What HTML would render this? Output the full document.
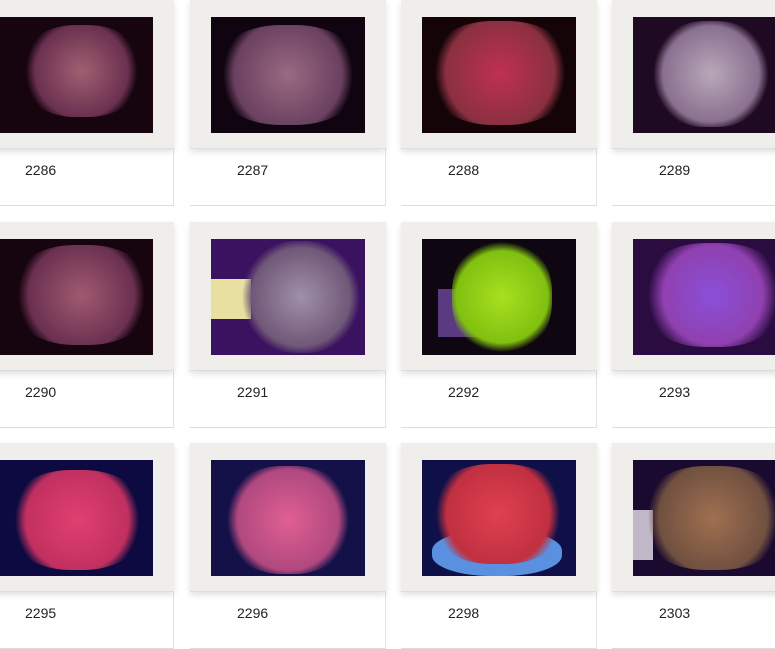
<!DOCTYPE html>
<html><head><style>
body{margin:0;width:775px;height:625px;overflow:hidden;background:#fff;position:relative;font-family:"Liberation Sans",Arial,sans-serif}
.card{position:absolute;width:196px;height:206px;border-right:1px solid #e2e2e2;border-bottom:1px solid #dcdcdc;box-sizing:border-box}
.fr{position:absolute;left:0;top:0;width:196px;height:148px;background:#efeeeb;box-shadow:0 3px 6px rgba(0,0,0,.12);border-bottom:1px solid #ddd}
.im{position:absolute;left:21px;top:17px;width:154px;height:116px;background:#120410;overflow:hidden}
.lb{position:absolute;left:47px;top:162px;font-size:14px;color:#222}
.im i{position:absolute;border-radius:45%}
</style></head><body>
<div class="card" style="left:-22px;top:0"><div class="fr"><div class="im" style="background:#16040f"><i style="left:20px;top:8px;width:125px;height:92px;background:radial-gradient(circle,#a06070 0%,#6a3050 60%,transparent 72%)"></i></div></div><div class="lb">2286</div></div>
<div class="card" style="left:190px;top:0"><div class="fr"><div class="im" style="background:#100410"><i style="left:2px;top:8px;width:150px;height:100px;background:radial-gradient(circle,#9a6a80 0%,#6a4060 60%,transparent 72%)"></i></div></div><div class="lb">2287</div></div>
<div class="card" style="left:401px;top:0"><div class="fr"><div class="im" style="background:#140408"><i style="left:4px;top:4px;width:148px;height:104px;background:radial-gradient(circle,#c03050 0%,#8a3040 60%,transparent 72%)"></i></div></div><div class="lb">2288</div></div>
<div class="card" style="left:612px;top:0"><div class="fr"><div class="im" style="background:#1e0a22"><i style="left:18px;top:4px;width:120px;height:106px;background:radial-gradient(circle,#b8a8b8 0%,#8a7090 60%,transparent 72%)"></i></div></div><div class="lb">2289</div></div>

<div class="card" style="left:-22px;top:222px"><div class="fr"><div class="im" style="background:#16040f"><i style="left:10px;top:6px;width:145px;height:100px;background:radial-gradient(circle,#a05a70 0%,#6a3050 60%,transparent 72%)"></i></div></div><div class="lb">2290</div></div>
<div class="card" style="left:190px;top:222px"><div class="fr"><div class="im" style="background:#3a1260"><i style="left:0;top:40px;width:40px;height:40px;border-radius:0;background:#e8e0a0"></i><i style="left:30px;top:2px;width:120px;height:112px;background:radial-gradient(circle,#a090a8 0%,#705878 60%,transparent 72%)"></i></div></div><div class="lb">2291</div></div>
<div class="card" style="left:401px;top:222px"><div class="fr"><div class="im" style="background:#0e0610"><i style="left:16px;top:50px;width:40px;height:48px;border-radius:0;background:#5a3a80"></i><i style="left:30px;top:0;width:100px;height:116px;background:radial-gradient(circle,#a8e020 0%,#80c010 60%,transparent 72%)"></i></div></div><div class="lb">2292</div></div>
<div class="card" style="left:612px;top:222px"><div class="fr"><div class="im" style="background:#2a0c40"><i style="left:6px;top:4px;width:148px;height:104px;background:radial-gradient(circle,#8a50d8 0%,#9040b0 55%,transparent 72%)"></i></div></div><div class="lb">2293</div></div>

<div class="card" style="left:-22px;top:443px"><div class="fr"><div class="im" style="background:#0c0a40"><i style="left:8px;top:10px;width:140px;height:100px;background:radial-gradient(circle,#e04070 0%,#c03060 60%,transparent 72%)"></i></div></div><div class="lb">2295</div></div>
<div class="card" style="left:190px;top:443px"><div class="fr"><div class="im" style="background:#141048"><i style="left:12px;top:6px;width:130px;height:108px;background:radial-gradient(circle,#e06090 0%,#b04880 60%,transparent 72%)"></i></div></div><div class="lb">2296</div></div>
<div class="card" style="left:401px;top:443px"><div class="fr"><div class="im" style="background:#101048"><i style="left:10px;top:70px;width:130px;height:46px;background:#5a90e0"></i><i style="left:6px;top:4px;width:140px;height:100px;background:radial-gradient(circle,#e04050 0%,#c03040 60%,transparent 72%)"></i></div></div><div class="lb">2298</div></div>
<div class="card" style="left:612px;top:443px"><div class="fr"><div class="im" style="background:#1a0a30"><i style="left:0;top:50px;width:20px;height:50px;border-radius:0;background:#c0b8c8"></i><i style="left:6px;top:6px;width:148px;height:104px;background:radial-gradient(circle,#a07050 0%,#705040 60%,transparent 72%)"></i></div></div><div class="lb">2303</div></div>
</body></html>
